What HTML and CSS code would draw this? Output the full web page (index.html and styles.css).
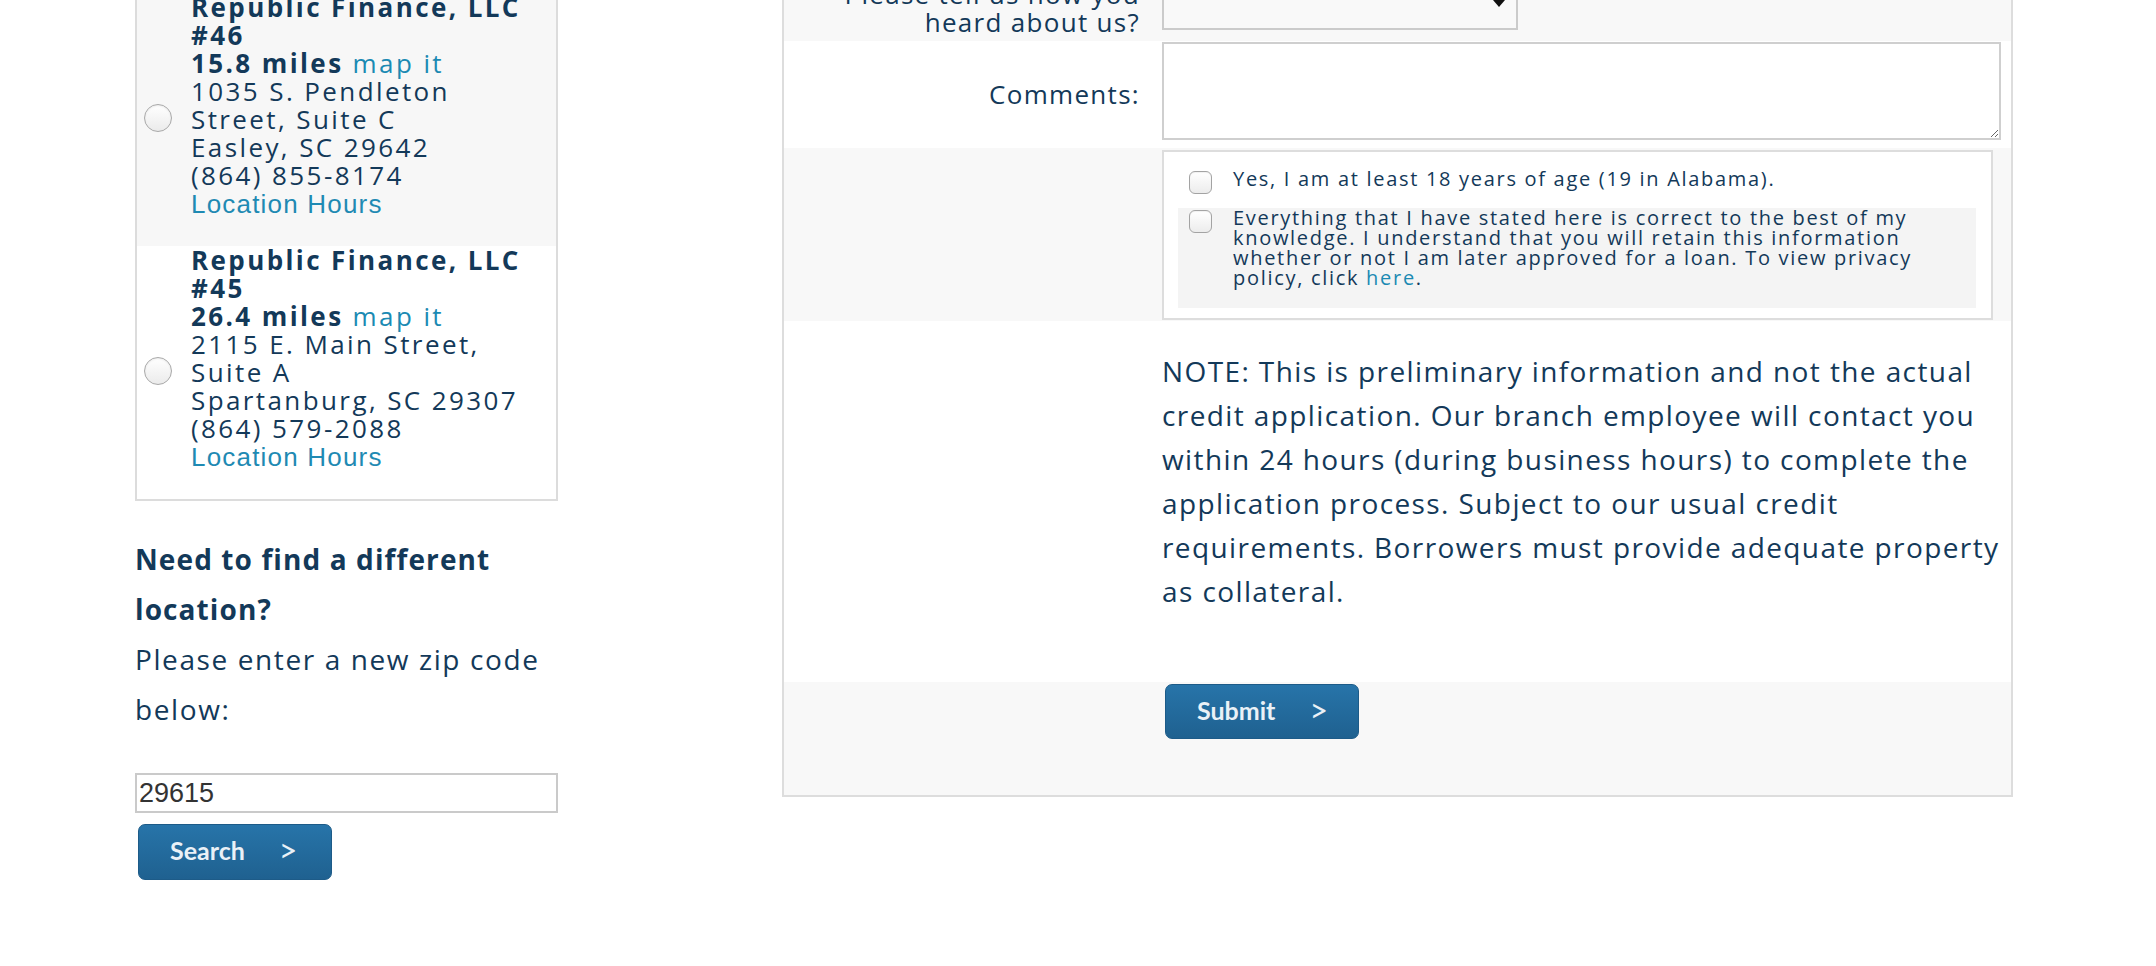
FILE: index.html
```html
<!DOCTYPE html>
<html lang="en">
<head>
<meta charset="utf-8">
<title>Republic Finance - Locations</title>
<link rel="stylesheet" href="styles.css">
</head>
<body>
<div class="page">
  <aside class="left">
    <div class="locations">
      <label class="loc loc-shaded">
        <input class="radio" type="radio" name="branch">
        <span class="loc-text">
          <strong class="loc-name">Republic Finance, LLC<br>#46</strong><br>
          <strong>15.8 miles</strong> <a class="link" href="#">map it</a><br>
          1035 S. Pendleton<br>Street, Suite C<br>
          Easley, SC 29642<br>
          (864) 855-8174<br>
          <a class="hours" href="#">Location Hours</a>
        </span>
      </label>
      <label class="loc">
        <input class="radio" type="radio" name="branch">
        <span class="loc-text">
          <strong class="loc-name">Republic Finance, LLC<br>#45</strong><br>
          <strong>26.4 miles</strong> <a class="link" href="#">map it</a><br>
          2115 E. Main Street,<br>Suite A<br>
          Spartanburg, SC 29307<br>
          (864) 579-2088<br>
          <a class="hours" href="#">Location Hours</a>
        </span>
      </label>
    </div>
    <p class="find">
      <strong>Need to find a different location?</strong><br>
      Please enter a new zip code below:
    </p>
    <input class="zip" type="text" value="29615">
    <button class="btn" type="button"><span>Search</span><span class="chev">&gt;</span></button>
  </aside>

  <form class="form">
    <div class="row row-gray row-heard">
      <div class="label">Please tell us how you<br>heard about us?</div>
      <div class="select"><span class="arrow"></span></div>
    </div>
    <div class="row row-comments">
      <div class="label label-mid">Comments:</div>
      <textarea class="comments"></textarea>
    </div>
    <div class="row row-gray row-checks">
      <div class="label"></div>
      <div class="checks">
        <label class="check check-first">
          <input class="cb" type="checkbox">
          <span>Yes, I am at least 18 years of age (19 in Alabama).</span>
        </label>
        <label class="check check-shaded">
          <input class="cb" type="checkbox">
          <span>Everything that I have stated here is correct to the best of my knowledge. I understand that you will retain this information whether or not I am later approved for a loan. To view privacy policy, click <a class="link" href="#">here</a>.</span>
        </label>
      </div>
    </div>
    <div class="row row-note">
      <div class="label"></div>
      <p class="note">NOTE: This is preliminary information and not the actual credit application. Our branch employee will contact you within 24 hours (during business hours) to complete the application process. Subject to our usual credit requirements. Borrowers must provide adequate property as collateral.</p>
    </div>
    <div class="row row-gray row-submit">
      <div class="label"></div>
      <div><button class="btn btn-submit" type="button"><span>Submit</span><span class="chev">&gt;</span></button></div>
    </div>
  </form>
</div>
</body>
</html>
```

FILE: styles.css
```css
* { box-sizing: border-box; }

html, body {
  margin: 0;
  padding: 0;
  background: #ffffff;
  overflow: hidden;
}

body {
  font-family: "Open Sans", "DejaVu Sans", sans-serif;
  color: #133959;
}

.page {
  display: flex;
  align-items: flex-start;
  padding-left: 135px;
  gap: 224px;
}

/* ---------- left column ---------- */
.left {
  width: 423px;
  margin-top: -9px;
  display: flex;
  flex-direction: column;
  align-items: flex-start;
}

.locations {
  width: 423px;
  border: 2px solid #dcdcdc;
}

.loc {
  display: flex;
  align-items: center;
  padding: 0 0 0 7px;
  background: #ffffff;
  cursor: pointer;
}

.loc-shaded { background: #f7f7f7; }

.radio {
  appearance: none;
  -webkit-appearance: none;
  margin: 0 19px 4px 0;
  width: 28px;
  height: 28px;
  flex: 0 0 28px;
  border-radius: 50%;
  border: 1px solid #a9a9a9;
  background: linear-gradient(#ffffff, #ebebeb);
  box-shadow: inset 0 1px 2px rgba(0,0,0,0.08);
}

.loc-text {
  display: block;
  padding-bottom: 28px;
  font-size: 26px;
  line-height: 28px;
  letter-spacing: 2.4px;
  color: #133959;
}

.loc-text strong { font-weight: 700; }

.link {
  color: #1b8ab3;
  text-decoration: none;
}

.hours {
  font-family: "Liberation Sans", Arial, sans-serif;
  color: #1f8ab3;
  letter-spacing: 1.2px;
  text-decoration: none;
}

.find {
  margin: 33px 0 0 0;
  font-size: 28px;
  line-height: 50px;
  letter-spacing: 1.6px;
  color: #133959;
}

.find strong {
  font-weight: 700;
  letter-spacing: 1.1px;
}

.zip {
  margin-top: 39px;
  width: 423px;
  height: 40px;
  border: 2px solid #cacaca;
  padding: 0 0 0 2px;
  font-family: "Liberation Sans", Arial, sans-serif;
  font-size: 27px;
  color: #333333;
  background: #ffffff;
  outline: none;
}

.btn {
  margin: 11px 0 0 3px;
  width: 194px;
  height: 56px;
  border: 1px solid #1d5b88;
  border-radius: 7px;
  background: linear-gradient(#2774a9, #1f6190);
  color: #eaf1f7;
  font-family: "Lato", "Open Sans", sans-serif;
  font-weight: 700;
  font-size: 25px;
  display: flex;
  align-items: center;
  padding: 0 0 4px 31px;
  gap: 34px;
  cursor: pointer;
}

.chev {
  font-weight: 400;
  font-size: 32px;
  line-height: 1;
}

/* ---------- right form ---------- */
.form {
  width: 1231px;
  margin-top: -26px;
  border: 2px solid #dddddd;
  background: #ffffff;
}

.row {
  display: grid;
  grid-template-columns: 356px 1fr;
  column-gap: 22px;
}

.row-gray { background: #f8f8f8; }

.label {
  text-align: right;
  font-size: 26px;
  line-height: 28px;
  letter-spacing: 1.3px;
  color: #133959;
}

.label-mid { margin-top: 6px; }

.row-heard {
  align-items: end;
  padding-bottom: 5px;
}

.select {
  width: 356px;
  height: 54px;
  margin-bottom: 6px;
  border: 2px solid #cbcbcb;
  background: #f9f9f9;
  display: flex;
  justify-content: flex-end;
  align-items: flex-end;
  padding-right: 11px;
  padding-bottom: 21px;
}

.arrow {
  width: 0;
  height: 0;
  border-left: 6px solid transparent;
  border-right: 6px solid transparent;
  border-top: 7px solid #111111;
}

.row-comments {
  align-items: center;
  padding: 1px 0 8px;
}

.comments {
  display: block;
  width: 839px;
  height: 98px;
  border: 2px solid #cfcfcf;
  background: #ffffff;
  resize: both;
  margin: 0;
  font-family: "Open Sans", sans-serif;
}

.row-checks {
  padding: 2px 0 1px;
}

.checks {
  width: 831px;
  border: 2px solid #dddddd;
  background: #ffffff;
  padding: 0 15px 10px 14px;
}

.check {
  display: flex;
  align-items: flex-start;
  padding-left: 11px;
  font-size: 20px;
  line-height: 20px;
  letter-spacing: 1.7px;
  color: #133959;
}

.check-first {
  padding-top: 17px;
  padding-bottom: 14px;
}

.check-shaded {
  background: #f4f4f4;
  padding-bottom: 20px;
  padding-right: 40px;
}

.cb {
  appearance: none;
  -webkit-appearance: none;
  margin: 2px 21px 0 0;
  width: 23px;
  height: 23px;
  flex: 0 0 23px;
  border: 1px solid #a3a3a3;
  border-radius: 6px;
  background: linear-gradient(#ffffff, #ececec);
  box-shadow: inset 0 1px 1px rgba(0,0,0,0.06);
}

.row-note {
  padding: 28px 0 69px;
}

.note {
  margin: 0;
  width: 850px;
  font-size: 28px;
  line-height: 44px;
  letter-spacing: 1.4px;
  color: #133959;
}

.row-submit {
  padding: 2px 0 56px;
}

.btn-submit {
  margin: 0 0 0 3px;
  height: 55px;
}
```
